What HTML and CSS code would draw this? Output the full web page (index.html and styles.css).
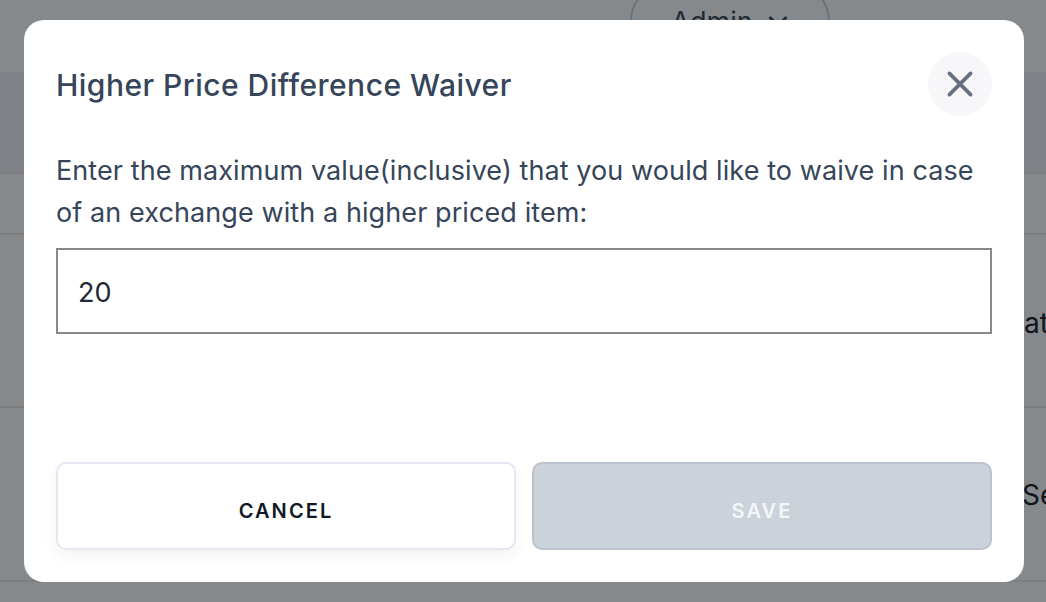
FILE: index.html
```html
<!DOCTYPE html>
<html lang="en">
<head>
  <meta charset="UTF-8">
  <title>Higher Price Difference Waiver</title>
  <link rel="stylesheet" href="styles.css">
</head>
<body>
  <div class="page">
    <div class="topbar">
      <div class="admin-pill">Admin
        <svg width="22" height="14" viewBox="0 0 22 14"><path d="M2.5 3l8.5 8.5L19.500 3" fill="none" stroke="#374151" stroke-width="3"/></svg>
      </div>
    </div>
    <div class="band"></div>
    <div class="row row-short"></div>
    <div class="row row-tall"><span class="row-text">at</span></div>
    <div class="row row-tall2"><span class="row-text row-text-wide">Se</span></div>
  </div>

  <div class="overlay">
    <div class="modal">
      <div class="modal-head">
        <h2>Higher Price Difference Waiver</h2>
        <button class="close">
          <svg width="28" height="28" viewBox="0 0 28 28"><path d="M3.4 3.400l21.200 21.200M24.600 3.400L3.400 24.600" fill="none" stroke="#667180" stroke-width="3.800" stroke-linecap="round"/></svg>
        </button>
      </div>
      <p class="desc">Enter the maximum value(inclusive) that you would like to waive in case of an exchange with a higher priced item:</p>
      <input class="amount" type="text" value="20">
      <div class="actions">
        <button class="btn btn-cancel">CANCEL</button>
        <button class="btn btn-save">SAVE</button>
      </div>
    </div>
  </div>
</body>
</html>
```

FILE: styles.css
```css
html, body {
  margin: 0;
  height: 100%;
  overflow: hidden;
}

body {
  font-family: Inter, "Liberation Sans", sans-serif;
  background: #fff;
}

.page {
  height: 602px;
  overflow: hidden;
}

.topbar {
  height: 72px;
  display: flex;
  justify-content: flex-end;
  align-items: flex-start;
  padding-right: 216px;
  overflow: hidden;
}

.admin-pill {
  flex: none;
  width: 196px;
  height: 72px;
  margin-top: -17px;
  border: 2px solid #c8ced8;
  border-radius: 38px;
  display: flex;
  align-items: center;
  justify-content: center;
  gap: 14px;
  font-size: 27px;
  color: #374151;
}

.band {
  height: 100px;
  background: #eff1f3;
}

.row {
  border-top: 2px solid #efe6e4;
  box-sizing: border-box;
  display: flex;
  justify-content: flex-end;
  align-items: center;
}

.row-short { height: 61px; }
.row-tall { height: 173px; padding-top: 4px; }
.row-tall2 { height: 176px; padding-top: 2px; border-bottom: 2px solid #efe6e4; }

.row-text {
  font-size: 28px;
  color: #111827;
  width: 22px;
  overflow: hidden;
  white-space: nowrap;
}

.row-text-wide { width: 24px; }

.overlay {
  position: absolute;
  inset: 0;
  background: rgba(13, 20, 26, 0.5);
}

.modal {
  position: absolute;
  left: 24px;
  top: 20px;
  width: 1000px;
  height: 562px;
  box-sizing: border-box;
  padding: 32px;
  background: #fff;
  border-radius: 20px;
  display: flex;
  flex-direction: column;
}

.modal-head {
  display: flex;
  justify-content: space-between;
  align-items: center;
  height: 64px;
}

.modal-head h2 {
  margin: 0;
  padding-top: 2px;
  font-size: 30px;
  font-weight: 500;
  letter-spacing: 0.47px;
  color: #364559;
}

.close {
  width: 64px;
  height: 64px;
  padding: 0;
  border: 0;
  border-radius: 50%;
  background: #f7f7f9;
  display: flex;
  align-items: center;
  justify-content: center;
}

.desc {
  margin: 34px 0 0;
  font-size: 27px;
  line-height: 42px;
  letter-spacing: 0.09px;
  color: #364559;
}

.amount {
  margin-top: 14px;
  height: 86px;
  box-sizing: border-box;
  padding: 2px 20px 0;
  border: 2px solid #87878c;
  border-radius: 0;
  outline: 0;
  font-family: inherit;
  font-size: 27px;
  color: #1f2937;
}

.actions {
  margin-top: auto;
  display: flex;
  gap: 16px;
}

.btn {
  flex: 1;
  height: 88px;
  padding: 10px 0 0;
  border-radius: 10px;
  font-family: inherit;
  font-size: 20px;
  font-weight: 600;
  letter-spacing: 2.1px;
}

.btn-cancel {
  background: #fff;
  border: 2px solid #e5e7f5;
  color: #111827;
  box-shadow: 0 6px 16px rgba(17, 24, 39, 0.05);
}

.btn-save {
  background: #cbd2da;
  border: 2px solid #bcc3cf;
  color: #f5f6f8;
}
```
